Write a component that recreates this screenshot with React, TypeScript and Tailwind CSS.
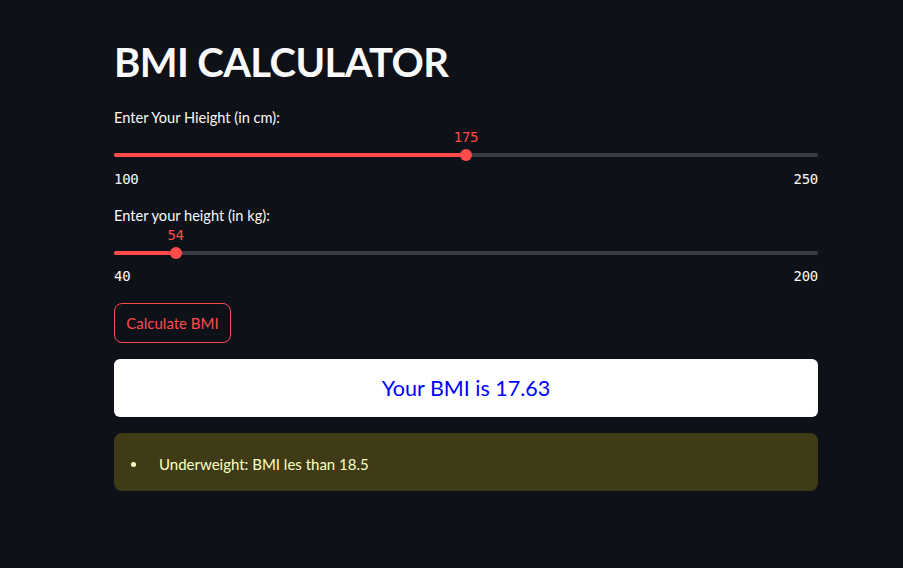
import React from "react";

const font = { fontFamily: '"Source Sans Pro", Lato, "Noto Sans", sans-serif' };

function Slider({ label, value, min, max, gap }: { label: string; value: number; min: number; max: number; gap: string }) {
  const pct = ((value - min) / (max - min)) * 100;
  return (
    <div className="flex flex-col">
      <div className="text-[14.6px] leading-[20px] text-[#fafafa]">{label}</div>
      <div className="relative h-[38px]">
        <div className="absolute left-0 right-0 top-[25px] h-[4px] rounded-full bg-[#3a3c44]" />
        <div className="absolute left-0 top-[25px] h-[4px] rounded-full bg-[#ff4b4b]" style={{ width: `${pct}%` }} />
        <div
          className="absolute top-[21px] h-[12px] w-[12px] -translate-x-1/2 rounded-full bg-[#ff4b4b]"
          style={{ left: `${pct}%` }}
        />
        <div
          className="absolute top-[1px] -translate-x-1/2 text-[14px] leading-[16px] text-[#ff4b4b] [font-family:'DejaVu_Sans_Mono',monospace] tracking-[-0.3px]"
          style={{ left: `${pct}%` }}
        >
          {value}
        </div>
      </div>
      <div className={`${gap} flex justify-between text-[14px] leading-[16px] text-[#fafafa] [font-family:'DejaVu_Sans_Mono',monospace] tracking-[-0.3px]`}>
        <span>{min}</span>
        <span>{max}</span>
      </div>
    </div>
  );
}

export default function App() {
  return (
    <div className="min-h-[568px] w-full bg-[#0e1117]" style={font}>
      <div className="ml-[114px] flex w-[704px] flex-col pt-[36px]">
        <h1 className="text-[40px] font-bold leading-[52px] tracking-[-0.6px] text-[#fafafa]">BMI CALCULATOR</h1>
        <div className="mt-[20px]">
          <Slider label="Enter Your Hieight (in cm):" value={175} min={100} max={250} gap="mt-[5px]" />
        </div>
        <div className="mt-[19px]">
          <Slider label="Enter your height (in kg):" value={54} min={40} max={200} gap="mt-[4px]" />
        </div>
        <div className="mt-[19px]">
          <button className="h-[40px] w-[117px] rounded-[8px] border border-[#ff4b4b] bg-[#0e1117] text-[15px] text-[#ff4b4b]">
            Calculate BMI
          </button>
        </div>
        <div className="mt-[16px] flex h-[58px] items-center justify-center rounded-[6px] bg-white text-[21.5px] text-[#0000ff]">
          Your BMI is 17.63
        </div>
        <div className="mt-[16px] flex h-[58px] items-center rounded-[8px] bg-[#3e3b16] pl-[17px] pt-[5px] text-[15px] text-[#ffffc2]">
          <span className="mr-[23px] h-[5px] w-[5px] rounded-full bg-[#ffffc2]" />
          <span>Underweight: BMI les than 18.5</span>
        </div>
      </div>
    </div>
  );
}
